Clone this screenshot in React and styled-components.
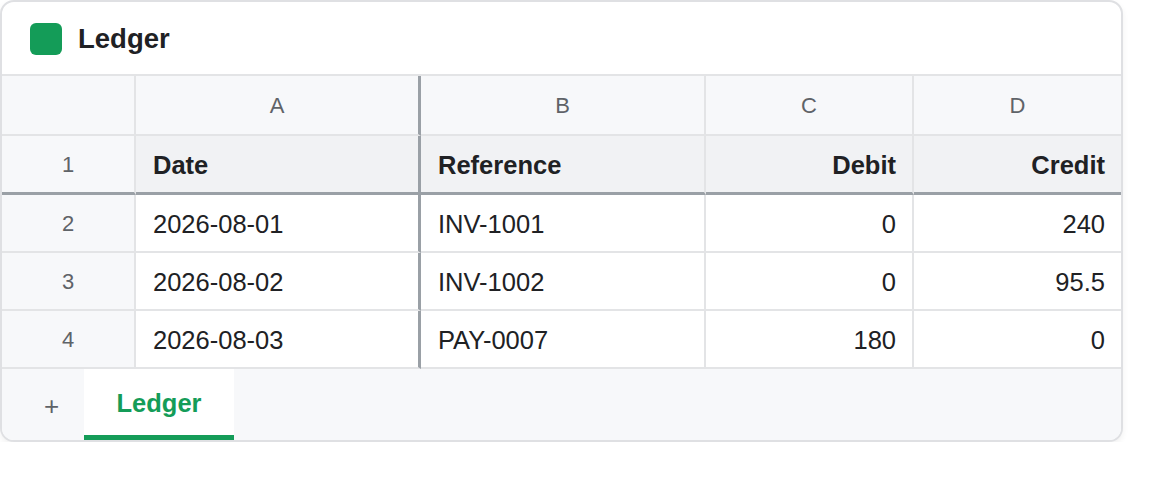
import styled, { createGlobalStyle } from 'styled-components';

const GlobalStyle = createGlobalStyle`
  html, body {
    margin: 0;
    padding: 0;
    background: #fff;
  }
  body {
    font-family: "Liberation Sans", Arial, sans-serif;
    color: #202124;
  }
`;

const columns = ['A', 'B', 'C', 'D'];
const header = [
  { text: 'Date', align: 'left' },
  { text: 'Reference', align: 'left' },
  { text: 'Debit', align: 'right' },
  { text: 'Credit', align: 'right' },
];
const rows = [
  ['2026-08-01', 'INV-1001', '0', '240'],
  ['2026-08-02', 'INV-1002', '0', '95.5'],
  ['2026-08-03', 'PAY-0007', '180', '0'],
];
const aligns = ['left', 'left', 'right', 'right'];

export default function App() {
  return (
    <>
      <GlobalStyle />
      <Card>
        <Header>
          <Badge />
          <Title>Ledger</Title>
        </Header>

        <Sheet>
          <Corner />
          {columns.map((c, i) => (
            <ColLetter key={c} $frozenCol={i === 0} $last={i === 3}>{c}</ColLetter>
          ))}

          <RowNum $frozen>1</RowNum>
          {header.map((h, i) => (
            <HeadCell key={h.text} $align={h.align} $frozenCol={i === 0} $last={i === 3}>
              {h.text}
            </HeadCell>
          ))}

          {rows.map((r, ri) => (
            <Row key={ri} r={r} n={ri + 2} />
          ))}
        </Sheet>

        <TabBar>
          <AddTab>+</AddTab>
          <Tab $active>Ledger</Tab>
        </TabBar>
      </Card>
    </>
  );
}

function Row({ r, n }) {
  return (
    <>
      <RowNum>{n}</RowNum>
      {r.map((v, i) => (
        <Cell key={i} $align={aligns[i]} $frozenCol={i === 0} $last={i === 3}>
          {v}
        </Cell>
      ))}
    </>
  );
}

const Card = styled.div`
  width: 1123px;
  box-sizing: border-box;
  border: 2px solid #dfe0e3;
  border-radius: 14px;
  overflow: hidden;
  background: #fff;
  box-shadow: 0 3px 6px rgba(0, 0, 0, 0.06);
`;

const Header = styled.div`
  height: 74px;
  box-sizing: border-box;
  display: flex;
  align-items: center;
  gap: 16px;
  padding: 1px 0 0 28px;
  border-bottom: 2px solid #e3e4e6;
`;

const Badge = styled.span`
  width: 32px;
  height: 32px;
  border-radius: 6px;
  background: #149c58;
`;

const Title = styled.h1`
  margin: 0;
  font-size: 27.5px;
  font-weight: 700;
  color: #202124;
`;

const Sheet = styled.div`
  display: grid;
  grid-template-columns: 134px 285px 285px 208px 1fr;
  grid-auto-rows: 58px;
  grid-template-rows: 60px 59px;
`;

const GridCell = styled.div`
  box-sizing: border-box;
  display: flex;
  align-items: center;
  padding-top: 2px;
  border-bottom: 2px solid #e3e4e6;
  border-right: ${({ $frozenCol, $last }) =>
    $last ? 'none' : $frozenCol ? '3px solid #9aa0a6' : '2px solid #e3e4e6'};
`;

const Corner = styled(GridCell)`
  background: #f7f8fa;
`;

const ColLetter = styled(GridCell)`
  justify-content: center;
  background: #f7f8fa;
  color: #5f6368;
  font-size: 22px;
`;

const RowNum = styled(GridCell)`
  justify-content: center;
  background: #f7f8fa;
  color: #5f6368;
  font-size: 22px;
  border-bottom: ${({ $frozen }) => ($frozen ? '3px solid #9aa0a6' : '2px solid #e3e4e6')};
`;

const Cell = styled(GridCell)`
  justify-content: ${({ $align }) => ($align === 'right' ? 'flex-end' : 'flex-start')};
  padding-left: 17px;
  padding-right: 16px;
  font-size: 25.5px;
  color: #202124;
  background: #fff;
`;

const HeadCell = styled(Cell)`
  font-weight: 700;
  background: #f1f2f4;
  border-bottom: 3px solid #9aa0a6;
`;

const TabBar = styled.div`
  height: 71px;
  display: flex;
  align-items: stretch;
  padding-left: 16px;
  background: #f7f8fa;
`;

const AddTab = styled.button`
  width: 66px;
  border: none;
  background: none;
  padding: 4px 0 0 1px;
  font-family: inherit;
  font-size: 26px;
  color: #5f6368;
  cursor: pointer;
`;

const Tab = styled.div`
  width: 150px;
  box-sizing: border-box;
  display: flex;
  align-items: center;
  justify-content: center;
  padding-top: 2px;
  font-size: 25.5px;
  font-weight: 700;
  color: ${({ $active }) => ($active ? '#149c58' : '#5f6368')};
  background: ${({ $active }) => ($active ? '#fff' : 'transparent')};
  border-bottom: 5px solid ${({ $active }) => ($active ? '#149c58' : 'transparent')};
`;
